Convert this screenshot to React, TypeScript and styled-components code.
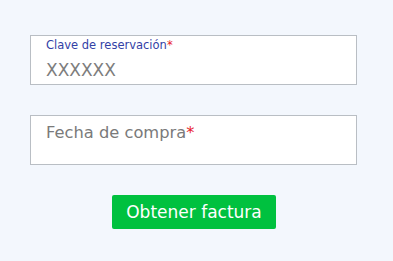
import styled, { createGlobalStyle } from "styled-components";

const GlobalStyle = createGlobalStyle`
  html, body {
    margin: 0;
    padding: 0;
    background: #f3f7fd;
  }
  body {
    font-family: "DejaVu Sans", "Noto Sans", sans-serif;
  }
`;

const Page = styled.div`
  width: 393px;
  height: 261px;
  box-sizing: border-box;
  padding: 35px 36px 0 30px;
  display: flex;
  flex-direction: column;
  align-items: stretch;
`;

const Field = styled.label<{ $filled?: boolean }>`
  display: flex;
  flex-direction: column;
  box-sizing: border-box;
  height: 50px;
  background: #ffffff;
  border: 1px solid #b9bec4;
  padding: ${(p) => (p.$filled ? "3px 15px 0" : "6px 15px 0")};
  margin-bottom: 30px;
`;

const SmallLabel = styled.span`
  font-size: 11.5px;
  line-height: 13px;
  color: #3341a6;
`;

const BigLabel = styled.span`
  font-size: 16.3px;
  line-height: 22px;
  color: #7a7a7a;
`;

const Star = styled.span`
  color: #e8222c;
`;

const Input = styled.input`
  border: none;
  outline: none;
  padding: 0;
  margin-top: 7px;
  font-family: inherit;
  font-size: 17px;
  line-height: 22px;
  color: #555;
  background: transparent;
  &::placeholder {
    color: #7d7d7d;
  }
`;

const Actions = styled.div`
  display: flex;
  justify-content: center;
  padding-left: 1px;
`;

const Button = styled.button`
  height: 34px;
  width: 164px;
  padding: 0;
  background: #00c13f;
  color: #ffffff;
  border: none;
  border-radius: 2px;
  font-family: inherit;
  font-size: 17px;
  cursor: pointer;
`;

export default function App() {
  return (
    <>
      <GlobalStyle />
      <Page>
        <Field $filled>
          <SmallLabel>
            Clave de reservación<Star>*</Star>
          </SmallLabel>
          <Input placeholder="XXXXXX" />
        </Field>
        <Field>
          <BigLabel>
            Fecha de compra<Star>*</Star>
          </BigLabel>
        </Field>
        <Actions>
          <Button>Obtener factura</Button>
        </Actions>
      </Page>
    </>
  );
}
